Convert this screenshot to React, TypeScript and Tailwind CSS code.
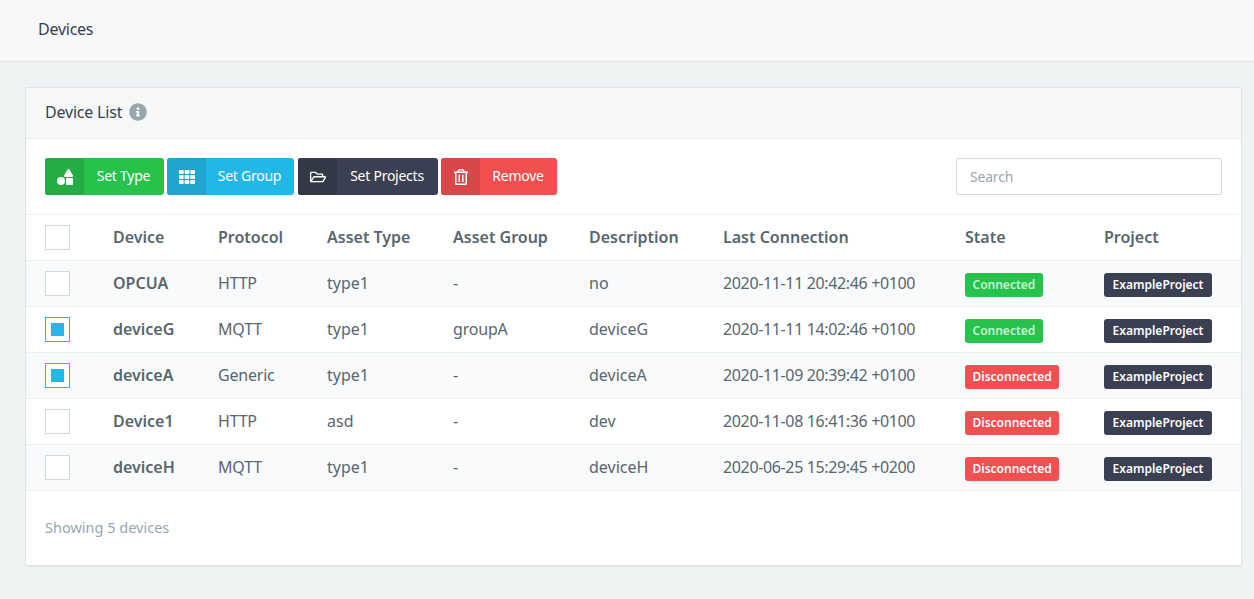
import { FaShapes, FaTh, FaRegFolderOpen, FaRegTrashAlt, FaInfoCircle } from 'react-icons/fa';

const devices = [
  { name: 'OPCUA', protocol: 'HTTP', type: 'type1', group: '-', description: 'no', last: '2020-11-11 20:42:46 +0100', connected: true, checked: false },
  { name: 'deviceG', protocol: 'MQTT', type: 'type1', group: 'groupA', description: 'deviceG', last: '2020-11-11 14:02:46 +0100', connected: true, checked: true },
  { name: 'deviceA', protocol: 'Generic', type: 'type1', group: '-', description: 'deviceA', last: '2020-11-09 20:39:42 +0100', connected: false, checked: true },
  { name: 'Device1', protocol: 'HTTP', type: 'asd', group: '-', description: 'dev', last: '2020-11-08 16:41:36 +0100', connected: false, checked: false },
  { name: 'deviceH', protocol: 'MQTT', type: 'type1', group: '-', description: 'deviceH', last: '2020-06-25 15:29:45 +0200', connected: false, checked: false },
];

const columns = 'grid grid-cols-[68px_105px_109px_126px_136px_134px_242px_139px_1fr] items-center';

function Checkbox({ checked = false }: { checked?: boolean }) {
  return (
    <span className={`flex h-[25px] w-[25px] items-center justify-center border bg-white ${checked ? 'border-[#22b8e8]' : 'border-[#cfdadd]'}`}>
      {checked && <span className="h-[13px] w-[13px] bg-[#22b8e8]" />}
    </span>
  );
}

function ActionButton({ icon, label, wrap, tint, width }: { icon: React.ReactNode; label: string; wrap: string; tint: string; width: string }) {
  return (
    <button className={`flex h-[37px] overflow-hidden rounded-[3px] text-[14px] tracking-[-0.25px] text-white ${wrap} ${width}`}>
      <span className={`flex h-full w-[39px] shrink-0 items-center justify-center ${tint}`}>{icon}</span>
      <span className="flex flex-1 items-center justify-center pb-[2px] pr-[1px]">{label}</span>
    </button>
  );
}

function Cell({ children, className = '' }: { children: React.ReactNode; className?: string }) {
  return <span className={`pb-[2px] ${className}`}>{children}</span>;
}

export default function App() {
  return (
    <div className="h-[599px] overflow-hidden bg-[#eff3f4] font-['Noto_Sans',sans-serif] text-[#58666e]">
      <header className="flex h-[62px] items-center border-b border-[#dee5e7] bg-[#f8f8f8] pb-[4px] pl-[38px] text-[16px] tracking-[-0.25px] text-[#3a3f51]">
        Devices
      </header>

      <div className="ml-[25px] mr-[12px] mt-[25px] h-[479px] rounded-[2px] border border-[#dee5e7] bg-white shadow-[0_1px_1px_rgba(0,0,0,0.05)]">
        <div className="flex h-[51px] items-center gap-[7px] border-b border-[#edf1f2] bg-[#f6f8f8] pb-[2px] pl-[19px] text-[16px] tracking-[-0.2px] text-[#3a3f51]">
          Device List
          <FaInfoCircle className="text-[18px] text-[#98a6ad]" />
        </div>

        <div className="flex h-[75px] items-center justify-between pl-[19px] pr-[19px]">
          <div className="flex gap-[3px]">
            <ActionButton icon={<FaShapes className="text-[16px]" />} label="Set Type" wrap="bg-[#27c24c]" tint="bg-[#23ad44]" width="w-[119px]" />
            <ActionButton icon={<FaTh className="text-[16px]" />} label="Set Group" wrap="mr-[1px] bg-[#23b7e5]" tint="bg-[#1fa5ce]" width="w-[127px]" />
            <ActionButton icon={<FaRegFolderOpen className="text-[16px]" />} label="Set Projects" wrap="bg-[#3a3f51]" tint="bg-[#343948]" width="w-[140px]" />
            <ActionButton icon={<FaRegTrashAlt className="text-[16px]" />} label="Remove" wrap="bg-[#f05050]" tint="bg-[#d84848]" width="w-[116px]" />
          </div>
          <input
            placeholder="Search"
            className="h-[37px] w-[266px] rounded-[2px] border border-[#cfdadd] px-[13px] text-[14px] tracking-[-0.2px] outline-none placeholder:text-[#9aa5ab]"
          />
        </div>

        <div className={`${columns} h-[47px] border-y border-[#edf1f2] pl-[19px] text-[16px] font-semibold`}>
          <Checkbox />
          <Cell>Device</Cell>
          <Cell>Protocol</Cell>
          <Cell>Asset Type</Cell>
          <Cell>Asset Group</Cell>
          <Cell>Description</Cell>
          <Cell>Last Connection</Cell>
          <Cell>State</Cell>
          <Cell>Project</Cell>
        </div>

        {devices.map((d, i) => (
          <div key={d.name} className={`${columns} h-[46px] border-b border-[#edf1f2] pl-[19px] text-[16px] ${i % 2 === 0 ? 'bg-[#f9fafb]' : 'bg-white'}`}>
            <Checkbox checked={d.checked} />
            <Cell className="font-semibold">{d.name}</Cell>
            <Cell className="tracking-[-0.2px]">{d.protocol}</Cell>
            <Cell>{d.type}</Cell>
            <Cell className="tracking-[-0.2px]">{d.group}</Cell>
            <Cell>{d.description}</Cell>
            <Cell className="tracking-[-0.36px]">{d.last}</Cell>
            <span className="flex pt-[2px]">
              <span className={`inline-flex h-[24px] items-center rounded-[3px] px-[7.5px] text-[12px] font-semibold ${d.connected ? 'bg-[#27c24c] text-[#c8f2d2]' : 'bg-[#f05050] text-white'}`}>
                {d.connected ? 'Connected' : 'Disconnected'}
              </span>
            </span>
            <span className="flex pt-[2px]">
              <span className="inline-flex h-[24px] items-center rounded-[3px] bg-[#3a3f51] px-[8.5px] text-[12px] font-semibold text-white">
                ExampleProject
              </span>
            </span>
          </div>
        ))}

        <div className="pl-[19px] pt-[26px] text-[14.5px] text-[#98a6ad]">Showing 5 devices</div>
      </div>
    </div>
  );
}
